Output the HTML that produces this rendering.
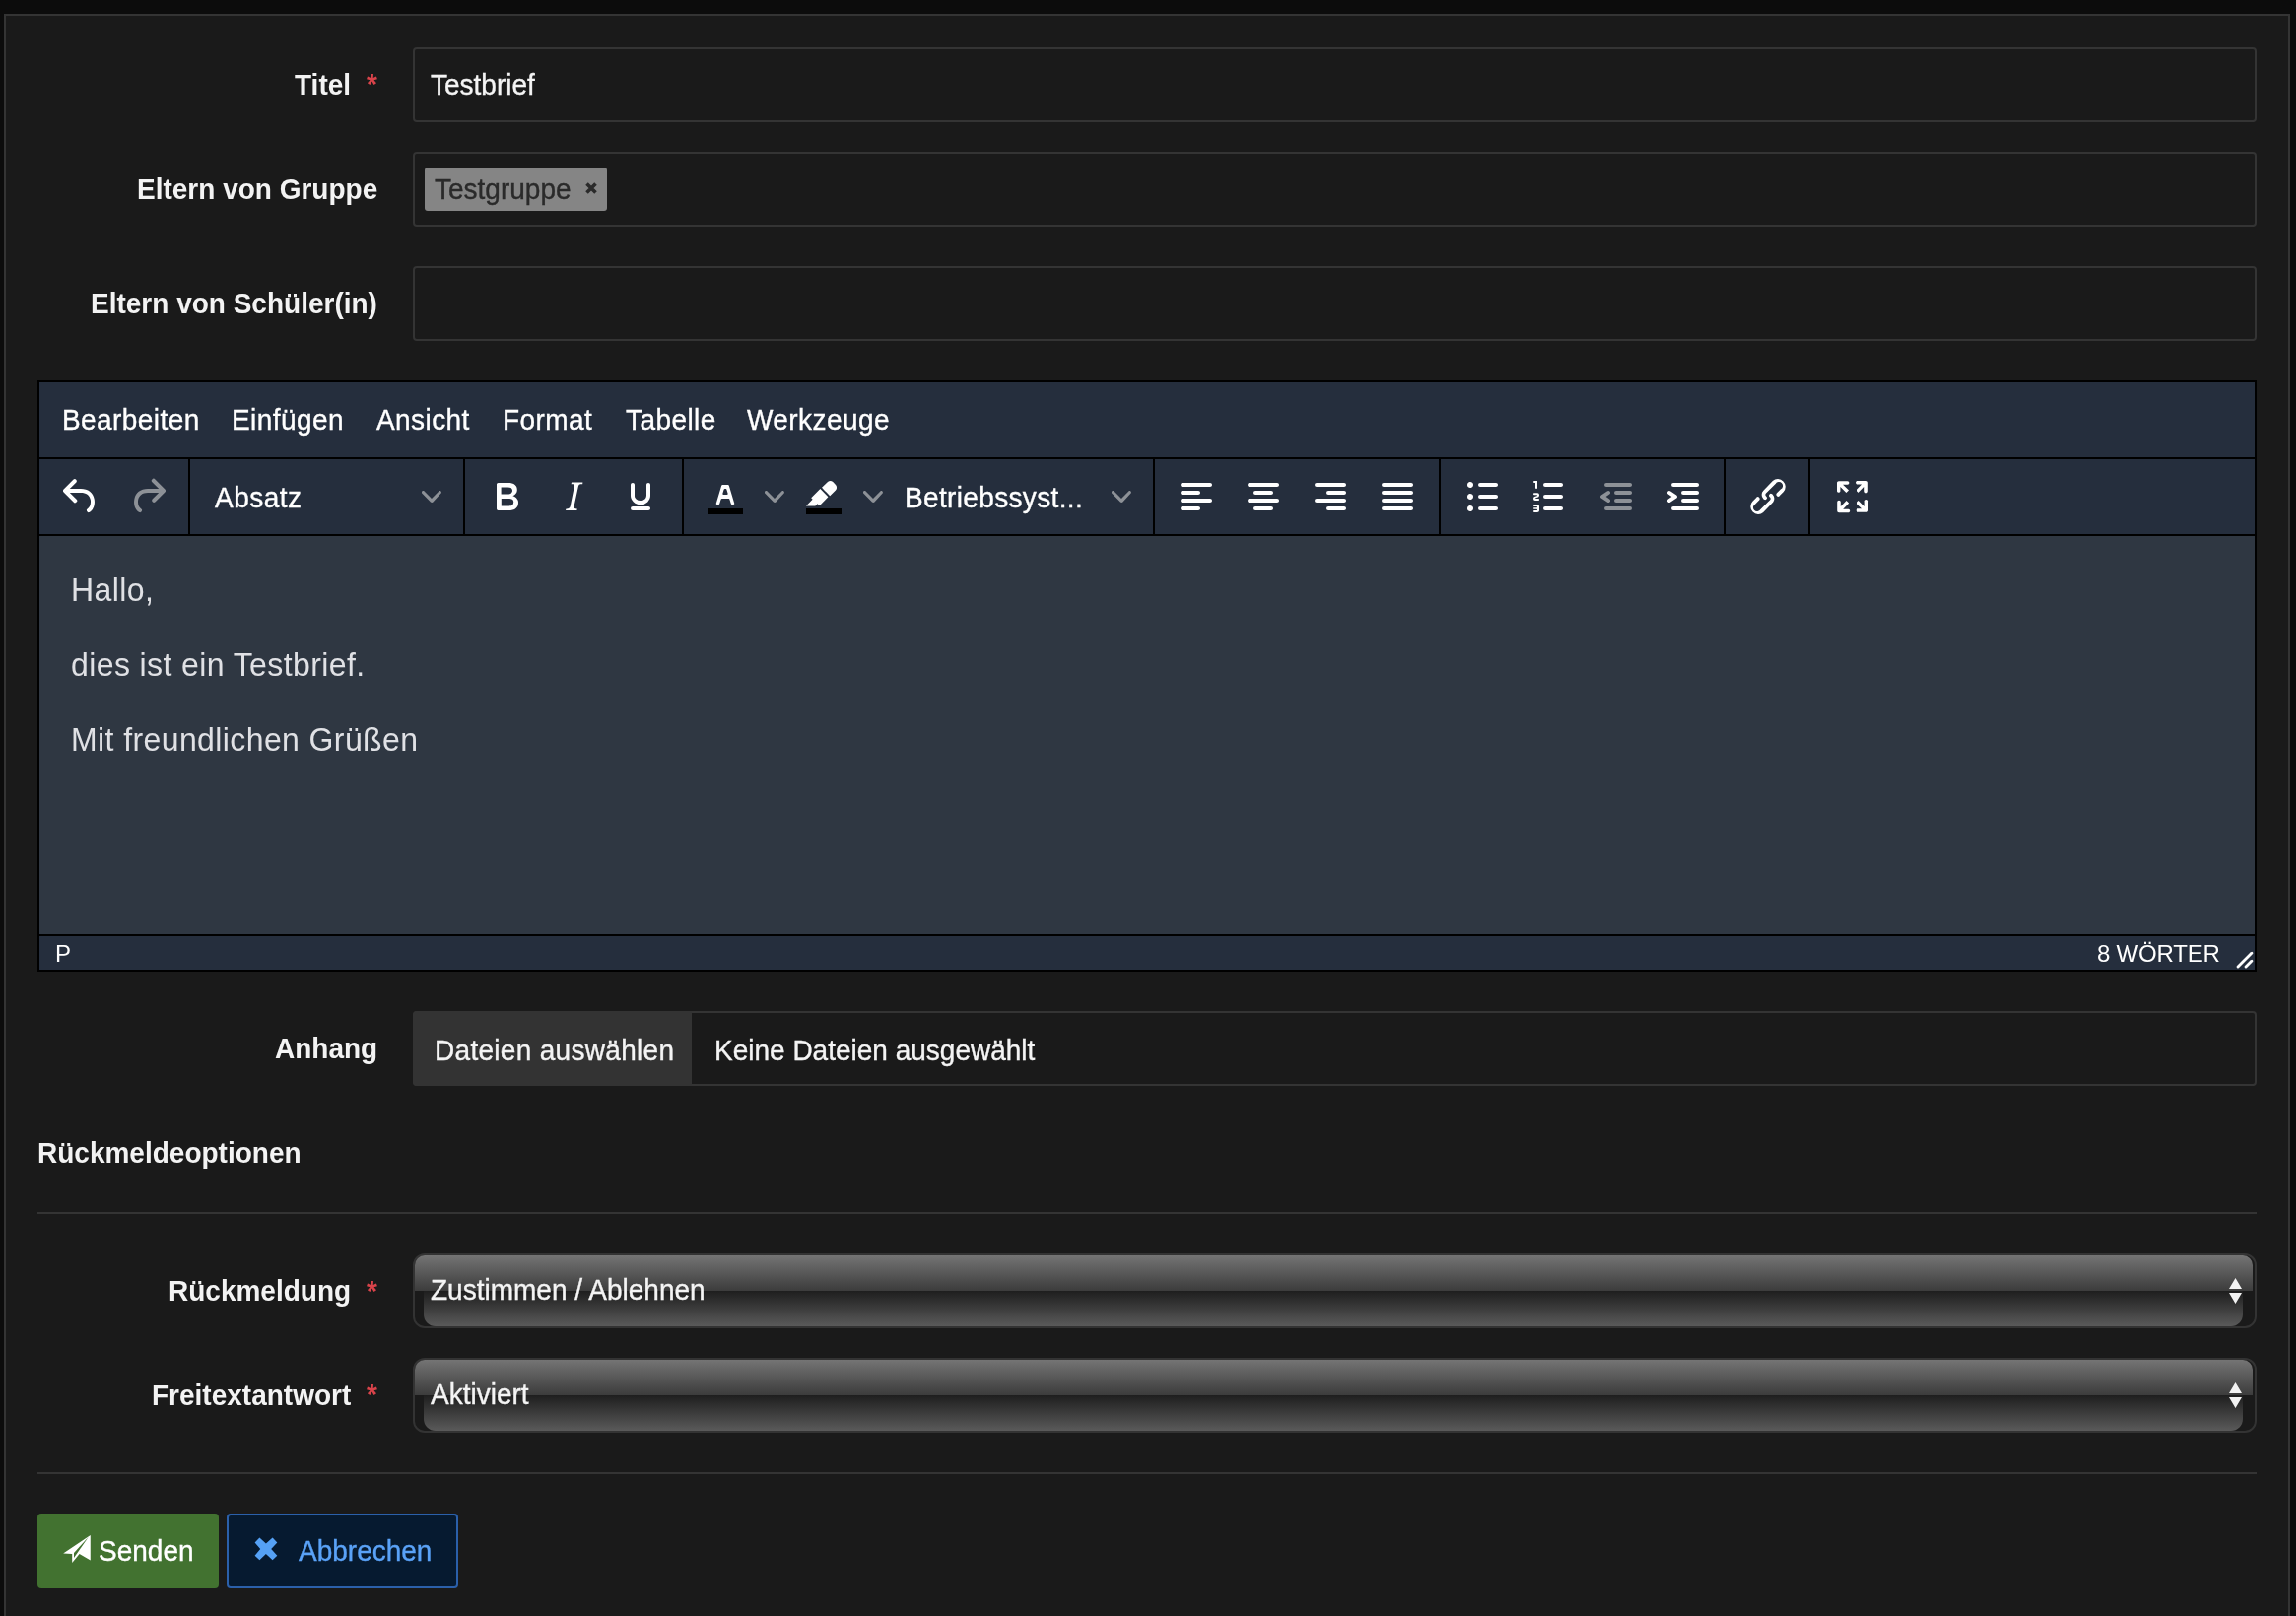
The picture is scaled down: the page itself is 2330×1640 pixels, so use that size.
<!DOCTYPE html>
<html><head><meta charset="utf-8"><title>Form</title><style>
html,body{margin:0;padding:0;}
body{width:2330px;height:1640px;overflow:hidden;background:#0c0c0c;position:relative;font-family:"Liberation Sans", sans-serif;}
.t{position:absolute;white-space:nowrap;will-change:transform;}
.b{position:absolute;box-sizing:border-box;}
svg{position:absolute;}
</style></head>
<body>
<div class="b" style="left:4px;top:14px;width:2320px;height:1626px;background:#1a1a1a;border:2px solid #343434;border-bottom:none;"></div>
<div class="t" style="right:1974px;top:72.80px;font-size:28px;line-height:28px;font-weight:700;color:#f3f3f3;text-align:right;transform:scaleY(1.05);transform-origin:0 23.70px;">Titel</div>
<div class="t" style="left:371.5px;top:72.10px;font-size:28px;line-height:28px;font-weight:700;color:#d9434a;transform:scaleY(1.05);transform-origin:0 23.70px;">*</div>
<div class="b" style="left:419px;top:48px;width:1871px;height:76px;border:2px solid #343434;border-radius:4px;"></div>
<div class="t" style="left:437px;top:72.80px;font-size:28px;line-height:28px;font-weight:400;color:#f4f4f4;transform:scaleY(1.05);transform-origin:0 23.70px;-webkit-text-stroke:0.35px #f4f4f4;">Testbrief</div>
<div class="t" style="right:1947px;top:178.80px;font-size:28px;line-height:28px;font-weight:700;color:#f3f3f3;text-align:right;transform:scaleY(1.05);transform-origin:0 23.70px;">Eltern von Gruppe</div>
<div class="b" style="left:419px;top:154px;width:1871px;height:76px;border:2px solid #343434;border-radius:4px;"></div>
<div class="b" style="left:431px;top:170px;width:185px;height:44px;background:#858585;border-radius:3px;"></div>
<div class="t" style="left:441px;top:179.40px;font-size:28px;line-height:28px;font-weight:400;color:#2a2a2a;transform:scaleY(1.05);transform-origin:0 23.70px;-webkit-text-stroke:0.35px #2a2a2a;">Testgruppe</div>
<svg style="left:594px;top:185px" width="12" height="12" viewBox="0 0 12 12"><path d="M1.5 1.5L10.5 10.5M10.5 1.5L1.5 10.5" stroke="#2a2a2a" stroke-width="3.6" stroke-linecap="butt"/></svg>
<div class="t" style="right:1947px;top:294.80px;font-size:28px;line-height:28px;font-weight:700;color:#f3f3f3;text-align:right;transform:scaleY(1.05);transform-origin:0 23.70px;">Eltern von Sch&uuml;ler(in)</div>
<div class="b" style="left:419px;top:270px;width:1871px;height:76px;border:2px solid #343434;border-radius:4px;"></div>
<div class="b" style="left:38px;top:386px;width:2252px;height:600px;background:#000;"></div>
<div class="b" style="left:40px;top:388px;width:2248px;height:76px;background:#252e3d;"></div>
<div class="b" style="left:40px;top:466px;width:2248px;height:76px;background:#252e3d;"></div>
<div class="b" style="left:40px;top:544px;width:2248px;height:404px;background:#2f3742;"></div>
<div class="b" style="left:40px;top:950px;width:2248px;height:34px;background:#252e3d;"></div>
<div class="t" style="left:63px;top:413.30px;font-size:28px;line-height:28px;font-weight:400;color:#ffffff;letter-spacing:0.42px;transform:scaleY(1.05);transform-origin:0 23.70px;-webkit-text-stroke:0.35px #ffffff;">Bearbeiten</div>
<div class="t" style="left:235px;top:413.30px;font-size:28px;line-height:28px;font-weight:400;color:#ffffff;letter-spacing:0.42px;transform:scaleY(1.05);transform-origin:0 23.70px;-webkit-text-stroke:0.35px #ffffff;">Einf&uuml;gen</div>
<div class="t" style="left:382px;top:413.30px;font-size:28px;line-height:28px;font-weight:400;color:#ffffff;letter-spacing:0.42px;transform:scaleY(1.05);transform-origin:0 23.70px;-webkit-text-stroke:0.35px #ffffff;">Ansicht</div>
<div class="t" style="left:509.5px;top:413.30px;font-size:28px;line-height:28px;font-weight:400;color:#ffffff;letter-spacing:0.42px;transform:scaleY(1.05);transform-origin:0 23.70px;-webkit-text-stroke:0.35px #ffffff;">Format</div>
<div class="t" style="left:635px;top:413.30px;font-size:28px;line-height:28px;font-weight:400;color:#ffffff;letter-spacing:0.42px;transform:scaleY(1.05);transform-origin:0 23.70px;-webkit-text-stroke:0.35px #ffffff;">Tabelle</div>
<div class="t" style="left:758px;top:413.30px;font-size:28px;line-height:28px;font-weight:400;color:#ffffff;letter-spacing:0.42px;transform:scaleY(1.05);transform-origin:0 23.70px;-webkit-text-stroke:0.35px #ffffff;">Werkzeuge</div>
<div class="b" style="left:191px;top:466px;width:2px;height:76px;background:#000;"></div>
<div class="b" style="left:470px;top:466px;width:2px;height:76px;background:#000;"></div>
<div class="b" style="left:692px;top:466px;width:2px;height:76px;background:#000;"></div>
<div class="b" style="left:1170px;top:466px;width:2px;height:76px;background:#000;"></div>
<div class="b" style="left:1460px;top:466px;width:2px;height:76px;background:#000;"></div>
<div class="b" style="left:1750px;top:466px;width:2px;height:76px;background:#000;"></div>
<div class="b" style="left:1835px;top:466px;width:2px;height:76px;background:#000;"></div>
<svg style="left:58px;top:480px" width="48" height="48" viewBox="0 0 24 24" fill="#ffffff"><path d="M6.4 8H12c3.7 0 6.2 2 6.8 5.1.6 2.7-.4 5.6-2.3 6.8a1 1 0 01-1-1.8c1.1-.7 1.8-2.7 1.4-4.6-.5-2.2-2.2-3.5-4.9-3.5H6.4l3.3 3.3a1 1 0 11-1.4 1.4l-5-5a1 1 0 010-1.4l5-5a1 1 0 011.4 1.4L6.4 8z" fill-rule="nonzero"/></svg>
<svg style="left:126px;top:480px" width="48" height="48" viewBox="0 0 24 24" fill="#8d9197"><path d="M17.6 10H12c-2.8 0-4.4 1.4-4.9 3.5-.4 2 .3 4 1.4 4.6a1 1 0 11-1 1.8c-2-1.2-2.9-4.1-2.3-6.8.6-3 3-5.1 6.8-5.1h5.6l-3.3-3.3a1 1 0 111.4-1.4l5 5a1 1 0 010 1.4l-5 5a1 1 0 01-1.4-1.4l3.3-3.3z" fill-rule="nonzero"/></svg>
<svg style="left:428px;top:494px" width="20" height="20" viewBox="0 0 10 10" fill="#8d9197"><path d="M8.7 2.2c.3-.3.8-.3 1 0 .4.4.4.9 0 1.2L5.7 7.8c-.3.3-.9.3-1.2 0L.2 3.4a.8.8 0 010-1.2c.3-.3.8-.3 1.1 0L5 6l3.7-3.8z" fill-rule="nonzero"/></svg>
<svg style="left:490px;top:480px" width="48" height="48" viewBox="0 0 24 24" fill="#ffffff"><path d="M7.8 19c-.3 0-.5 0-.6-.2l-.2-.5V5.7c0-.2 0-.4.2-.5l.6-.2h5c1.5 0 2.7.3 3.5 1 .7.6 1.1 1.4 1.1 2.5a3 3 0 01-.6 1.9c-.4.6-1 1-1.6 1.2.4.1.9.3 1.3.6s.8.7 1 1.2c.4.4.5 1 .5 1.6 0 1.3-.4 2.3-1.3 3-.8.7-2.1 1-3.8 1H7.8zm5-8.3c.6 0 1.2-.1 1.6-.5.4-.3.6-.7.6-1.3 0-1.1-.8-1.7-2.3-1.7H9.3v3.5h3.4zm.5 6c.7 0 1.3-.1 1.7-.4.4-.4.6-.9.6-1.5s-.2-1-.7-1.4c-.4-.3-1-.4-2-.4H9.4v3.8h4z" fill-rule="evenodd"/></svg>
<svg style="left:558px;top:480px" width="48" height="48" viewBox="0 0 24 24" fill="#ffffff"><path d="M16.7 4.7l-.1.9h-.3c-.6 0-1 0-1.4.3-.3.3-.4.6-.5 1.1l-2.1 9.8v.6c0 .5.4.8 1.4.8h.2l-.2.8H8l.2-.8h.2c1.1 0 1.8-.5 2-1.5l2-9.8.1-.5c0-.6-.4-.8-1.4-.8h-.3l.2-.9h5.8z" fill-rule="evenodd"/></svg>
<svg style="left:626px;top:480px" width="48" height="48" viewBox="0 0 24 24" fill="#ffffff"><path d="M16 5c.6 0 1 .4 1 1v5.5a4 4 0 01-.4 1.8l-1 1.4a5.3 5.3 0 01-5.5 1 5 5 0 01-1.6-1c-.5-.4-.8-.9-1.1-1.4a4 4 0 01-.4-1.8V6c0-.6.4-1 1-1s1 .4 1 1v5.5c0 .3 0 .6.2 1l.6.7a3.3 3.3 0 002.2.8 3.4 3.4 0 002.2-.8c.3-.2.4-.5.6-.8l.2-.9V6c0-.6.4-1 1-1zM8 17h8c.6 0 1 .4 1 1s-.4 1-1 1H8a1 1 0 010-2z" fill-rule="evenodd"/></svg>
<svg style="left:712px;top:480px" width="48" height="48" viewBox="0 0 24 24" fill="#ffffff"><path d="M3 18h18v3H3z" fill="#000"/><path d="M8.7 16h-.8a.5.5 0 01-.5-.6l2.7-9c.1-.3.3-.4.5-.4h2.8c.2 0 .4.1.5.4l2.7 9a.5.5 0 01-.5.6h-.8a.5.5 0 01-.4-.4l-.7-2.2c0-.3-.3-.4-.5-.4h-3.4c-.2 0-.4.1-.5.4l-.7 2.2c0 .3-.2.4-.4.4zm2.6-7.6l-.6 2a.5.5 0 00.5.6h1.6a.5.5 0 00.5-.6l-.6-2c0-.3-.3-.4-.5-.4h-.4c-.2 0-.4.1-.5.4z" fill-rule="evenodd"/></svg>
<svg style="left:776px;top:494px" width="20" height="20" viewBox="0 0 10 10" fill="#8d9197"><path d="M8.7 2.2c.3-.3.8-.3 1 0 .4.4.4.9 0 1.2L5.7 7.8c-.3.3-.9.3-1.2 0L.2 3.4a.8.8 0 010-1.2c.3-.3.8-.3 1.1 0L5 6l3.7-3.8z" fill-rule="nonzero"/></svg>
<svg style="left:812px;top:480px" width="48" height="48" viewBox="0 0 24 24" fill="#ffffff"><path d="M3 18h18v3H3z" fill="#000"/><path fill-rule="nonzero" d="M7.7 16.7H3l3.3-3.3-.7-.8L10.2 8l4 4.1-4 4.2c-.2.2-.6.2-.8 0l-.6-.7-1.1 1.1zm5-7.5L11 7.4l3-2.9a2 2 0 012.6 0L18 6c.7.7.7 2 0 2.7l-2.9 2.9-1.8-1.8-.5-.6"/></svg>
<svg style="left:876px;top:494px" width="20" height="20" viewBox="0 0 10 10" fill="#8d9197"><path d="M8.7 2.2c.3-.3.8-.3 1 0 .4.4.4.9 0 1.2L5.7 7.8c-.3.3-.9.3-1.2 0L.2 3.4a.8.8 0 010-1.2c.3-.3.8-.3 1.1 0L5 6l3.7-3.8z" fill-rule="nonzero"/></svg>
<svg style="left:1128px;top:494px" width="20" height="20" viewBox="0 0 10 10" fill="#8d9197"><path d="M8.7 2.2c.3-.3.8-.3 1 0 .4.4.4.9 0 1.2L5.7 7.8c-.3.3-.9.3-1.2 0L.2 3.4a.8.8 0 010-1.2c.3-.3.8-.3 1.1 0L5 6l3.7-3.8z" fill-rule="nonzero"/></svg>
<svg style="left:1190px;top:480px" width="48" height="48" viewBox="0 0 24 24" fill="#ffffff"><path d="M5 5h14c.6 0 1 .4 1 1s-.4 1-1 1H5a1 1 0 110-2zm0 4h8c.6 0 1 .4 1 1s-.4 1-1 1H5a1 1 0 110-2zm0 8h8c.6 0 1 .4 1 1s-.4 1-1 1H5a1 1 0 010-2zm0-4h14c.6 0 1 .4 1 1s-.4 1-1 1H5a1 1 0 010-2z" fill-rule="evenodd"/></svg>
<svg style="left:1258px;top:480px" width="48" height="48" viewBox="0 0 24 24" fill="#ffffff"><path d="M5 5h14c.6 0 1 .4 1 1s-.4 1-1 1H5a1 1 0 110-2zm3 4h8c.6 0 1 .4 1 1s-.4 1-1 1H8a1 1 0 110-2zm0 8h8c.6 0 1 .4 1 1s-.4 1-1 1H8a1 1 0 010-2zm-3-4h14c.6 0 1 .4 1 1s-.4 1-1 1H5a1 1 0 010-2z" fill-rule="evenodd"/></svg>
<svg style="left:1326px;top:480px" width="48" height="48" viewBox="0 0 24 24" fill="#ffffff"><path d="M5 5h14c.6 0 1 .4 1 1s-.4 1-1 1H5a1 1 0 110-2zm6 4h8c.6 0 1 .4 1 1s-.4 1-1 1h-8a1 1 0 010-2zm0 8h8c.6 0 1 .4 1 1s-.4 1-1 1h-8a1 1 0 010-2zm-6-4h14c.6 0 1 .4 1 1s-.4 1-1 1H5a1 1 0 010-2z" fill-rule="evenodd"/></svg>
<svg style="left:1394px;top:480px" width="48" height="48" viewBox="0 0 24 24" fill="#ffffff"><path d="M5 5h14c.6 0 1 .4 1 1s-.4 1-1 1H5a1 1 0 110-2zm0 4h14c.6 0 1 .4 1 1s-.4 1-1 1H5a1 1 0 110-2zm0 4h14c.6 0 1 .4 1 1s-.4 1-1 1H5a1 1 0 010-2zm0 4h14c.6 0 1 .4 1 1s-.4 1-1 1H5a1 1 0 010-2z" fill-rule="evenodd"/></svg>
<svg style="left:1480px;top:480px" width="48" height="48" viewBox="0 0 24 24" fill="#ffffff"><path d="M11 5h8c.6 0 1 .4 1 1s-.4 1-1 1h-8a1 1 0 010-2zm0 6h8c.6 0 1 .4 1 1s-.4 1-1 1h-8a1 1 0 010-2zm0 6h8c.6 0 1 .4 1 1s-.4 1-1 1h-8a1 1 0 010-2zM4.5 6c0-.4.1-.8.4-1 .3-.4.7-.5 1.1-.5.4 0 .8.1 1 .4.4.3.5.7.5 1.1 0 .4-.1.8-.4 1-.3.4-.7.5-1.1.5-.4 0-.8-.1-1-.4-.4-.3-.5-.7-.5-1.1zm0 6c0-.4.1-.8.4-1 .3-.4.7-.5 1.1-.5.4 0 .8.1 1 .4.4.3.5.7.5 1.1 0 .4-.1.8-.4 1-.3.4-.7.5-1.1.5-.4 0-.8-.1-1-.4-.4-.3-.5-.7-.5-1.1zm0 6c0-.4.1-.8.4-1 .3-.4.7-.5 1.1-.5.4 0 .8.1 1 .4.4.3.5.7.5 1.1 0 .4-.1.8-.4 1-.3.4-.7.5-1.1.5-.4 0-.8-.1-1-.4-.4-.3-.5-.7-.5-1.1z" fill-rule="evenodd"/></svg>
<svg style="left:1548px;top:480px" width="48" height="48" viewBox="0 0 24 24" fill="#ffffff"><path d="M10 17h8c.6 0 1 .4 1 1s-.4 1-1 1h-8a1 1 0 010-2zm0-6h8c.6 0 1 .4 1 1s-.4 1-1 1h-8a1 1 0 010-2zm0-6h8c.6 0 1 .4 1 1s-.4 1-1 1h-8a1 1 0 110-2zM6 4v3.5c0 .3-.2.5-.5.5a.5.5 0 01-.5-.5V5h-.5a.5.5 0 010-1H6zm-1 8.8l.2.2h1.3c.3 0 .5.2.5.5s-.2.5-.5.5H4.9a1 1 0 01-.9-1V13c0-.4.3-.8.6-1l1.2-.4.2-.3a.2.2 0 00-.2-.2H4.5a.5.5 0 01-.5-.5c0-.3.2-.5.5-.5h1.6c.5 0 .9.4.9 1v.1c0 .4-.3.8-.6 1l-1.2.4-.2.3zM7 17v2c0 .6-.4 1-1 1H4.5a.5.5 0 010-1h1.2c.2 0 .3-.1.3-.3 0-.2-.1-.3-.3-.3H4.4a.4.4 0 110-.8h1.3c.2 0 .3-.1.3-.3 0-.2-.1-.3-.3-.3H4.5a.5.5 0 110-1H6c.6 0 1 .4 1 1z" fill-rule="evenodd"/></svg>
<svg style="left:1616px;top:480px" width="48" height="48" viewBox="0 0 24 24" fill="#8d9197"><path d="M7 5h12c.6 0 1 .4 1 1s-.4 1-1 1H7a1 1 0 110-2zm5 4h7c.6 0 1 .4 1 1s-.4 1-1 1h-7a1 1 0 010-2zm0 4h7c.6 0 1 .4 1 1s-.4 1-1 1h-7a1 1 0 010-2zm-5 4h12a1 1 0 010 2H7a1 1 0 010-2zm1.6-3.8a1 1 0 01-1.2 1.6l-3-2a1 1 0 010-1.6l3-2a1 1 0 011.2 1.6L6.8 12l1.8 1.2z" fill-rule="evenodd"/></svg>
<svg style="left:1684px;top:480px" width="48" height="48" viewBox="0 0 24 24" fill="#ffffff"><path d="M7 5h12c.6 0 1 .4 1 1s-.4 1-1 1H7a1 1 0 110-2zm5 4h7c.6 0 1 .4 1 1s-.4 1-1 1h-7a1 1 0 010-2zm0 4h7c.6 0 1 .4 1 1s-.4 1-1 1h-7a1 1 0 010-2zm-5 4h12a1 1 0 010 2H7a1 1 0 010-2zm-2.6-3.8L6.2 12l-1.8-1.2a1 1 0 011.2-1.6l3 2a1 1 0 010 1.6l-3 2a1 1 0 11-1.2-1.6z" fill-rule="evenodd"/></svg>
<svg style="left:1770px;top:480px" width="48" height="48" viewBox="0 0 24 24" fill="#ffffff"><path d="M6.2 12.3a1 1 0 011.4 1.4l-2 2a2 2 0 102.6 2.8l4.8-4.8a1 1 0 000-1.4 1 1 0 111.4-1.3 2.9 2.9 0 010 4L9.6 20a3.9 3.9 0 01-5.5-5.5l2-2zm11.6-.6a1 1 0 01-1.4-1.4l2-2a2 2 0 10-2.6-2.8L11 10.3a1 1 0 000 1.4A1 1 0 119.6 13a2.9 2.9 0 010-4L14.4 4a3.9 3.9 0 015.5 5.5l-2 2z" fill-rule="nonzero"/></svg>
<svg style="left:1856px;top:480px" width="48" height="48" viewBox="0 0 24 24" fill="#ffffff"><path d="M15.3 10l-1.2-1.3 2.9-3h-2.3a.9.9 0 110-1.7H19c.5 0 .9.4.9.9v4.4a.9.9 0 11-1.8 0V7l-2.9 3zm0 4l3 3v-2.3a.9.9 0 111.7 0V19c0 .5-.4.9-.9.9h-4.4a.9.9 0 110-1.8H17l-3-2.9 1.3-1.2zM10 15.4l-2.9 3h2.3a.9.9 0 110 1.7H5a.9.9 0 01-.9-.9v-4.4a.9.9 0 111.8 0V17l2.9-3 1.2 1.3zM8.7 10L5.7 7v2.3a.9.9 0 01-1.7 0V5c0-.5.4-.9.9-.9h4.4a.9.9 0 010 1.8H7l3 2.9-1.3 1.2z" fill-rule="nonzero"/></svg>
<svg style="left:2268px;top:964px" width="20" height="20" viewBox="0 0 10 10" fill="#ffffff"><path d="M8.1 1.1A.5.5 0 119 2l-7 7A.5.5 0 111 8l7-7zM8.1 5.1A.5.5 0 119 6l-3 3A.5.5 0 115 8l3-3z" fill-rule="nonzero"/></svg>
<div class="t" style="left:218px;top:491.80px;font-size:28px;line-height:28px;font-weight:400;color:#ffffff;letter-spacing:0.5px;transform:scaleY(1.05);transform-origin:0 23.70px;-webkit-text-stroke:0.35px #ffffff;">Absatz</div>
<div class="t" style="left:918px;top:491.80px;font-size:28px;line-height:28px;font-weight:400;color:#ffffff;letter-spacing:0.35px;transform:scaleY(1.05);transform-origin:0 23.70px;-webkit-text-stroke:0.35px #ffffff;">Betriebssyst...</div>
<div class="t" style="left:72px;top:583.41px;font-size:32px;line-height:32px;font-weight:400;color:#e0e1e5;letter-spacing:0.4px;transform:scaleY(1.02);transform-origin:0 27.09px;">Hallo,</div>
<div class="t" style="left:72px;top:658.91px;font-size:32px;line-height:32px;font-weight:400;color:#e0e1e5;letter-spacing:0.4px;transform:scaleY(1.02);transform-origin:0 27.09px;">dies ist ein Testbrief.</div>
<div class="t" style="left:72px;top:734.91px;font-size:32px;line-height:32px;font-weight:400;color:#e0e1e5;letter-spacing:0.4px;transform:scaleY(1.02);transform-origin:0 27.09px;">Mit freundlichen Gr&uuml;&szlig;en</div>
<div class="t" style="left:56px;top:955.68px;font-size:24px;line-height:24px;font-weight:400;color:#ffffff;">P</div>
<div class="t" style="right:77.5px;top:955.68px;font-size:24px;line-height:24px;font-weight:400;color:#ffffff;text-align:right;letter-spacing:-0.2px;">8 W&Ouml;RTER</div>
<div class="t" style="right:1947px;top:1051.20px;font-size:28px;line-height:28px;font-weight:700;color:#f3f3f3;text-align:right;transform:scaleY(1.05);transform-origin:0 23.70px;">Anhang</div>
<div class="b" style="left:419px;top:1026px;width:1871px;height:76px;border:2px solid #343434;border-radius:4px;"></div>
<div class="b" style="left:419px;top:1026px;width:283px;height:76px;background:#333333;border-radius:4px 0 0 4px;"></div>
<div class="t" style="left:441px;top:1053.20px;font-size:28px;line-height:28px;font-weight:400;color:#f4f4f4;letter-spacing:0.3px;transform:scaleY(1.05);transform-origin:0 23.70px;-webkit-text-stroke:0.35px #f4f4f4;">Dateien ausw&auml;hlen</div>
<div class="t" style="left:725px;top:1052.90px;font-size:28px;line-height:28px;font-weight:400;color:#f4f4f4;transform:scaleY(1.05);transform-origin:0 23.70px;-webkit-text-stroke:0.35px #f4f4f4;">Keine Dateien ausgew&auml;hlt</div>
<div class="t" style="left:38px;top:1157.00px;font-size:28px;line-height:28px;font-weight:700;color:#f3f3f3;transform:scaleY(1.05);transform-origin:0 23.70px;">R&uuml;ckmeldeoptionen</div>
<div class="b" style="left:38px;top:1230px;width:2252px;height:2px;background:#343434;"></div>
<div class="t" style="right:1974px;top:1297.40px;font-size:28px;line-height:28px;font-weight:700;color:#f3f3f3;text-align:right;transform:scaleY(1.05);transform-origin:0 23.70px;">R&uuml;ckmeldung</div>
<div class="t" style="left:371.5px;top:1296.70px;font-size:28px;line-height:28px;font-weight:700;color:#d9434a;transform:scaleY(1.05);transform-origin:0 23.70px;">*</div>
<div class="b" style="left:419px;top:1272px;width:1871px;height:76px;border:2px solid #333333;border-radius:12px;background:#1a1a1a;"></div>
<div class="b" style="left:421px;top:1274px;width:1865px;height:36px;background:linear-gradient(#747474,#3c3c3c);border-radius:10px 10px 0 0;"></div>
<div class="b" style="left:430px;top:1310px;width:1846px;height:36px;background:linear-gradient(#1e1e1e,#5a5a5a);border-radius:0 0 12px 12px;"></div>
<div class="t" style="left:437px;top:1296.40px;font-size:28px;line-height:28px;font-weight:400;color:#f4f4f4;transform:scaleY(1.05);transform-origin:0 23.70px;-webkit-text-stroke:0.35px #f4f4f4;">Zustimmen / Ablehnen</div>
<svg style="left:2261.5px;top:1297px" width="13" height="27" viewBox="0 0 13 27"><path d="M6.5 0L13 11H0z M0 15H13L6.5 26z" fill="#f2f2f2"/></svg>
<div class="t" style="right:1974px;top:1402.80px;font-size:28px;line-height:28px;font-weight:700;color:#f3f3f3;text-align:right;transform:scaleY(1.05);transform-origin:0 23.70px;">Freitextantwort</div>
<div class="t" style="left:371.5px;top:1402.10px;font-size:28px;line-height:28px;font-weight:700;color:#d9434a;transform:scaleY(1.05);transform-origin:0 23.70px;">*</div>
<div class="b" style="left:419px;top:1378px;width:1871px;height:76px;border:2px solid #333333;border-radius:12px;background:#1a1a1a;"></div>
<div class="b" style="left:421px;top:1380px;width:1865px;height:36px;background:linear-gradient(#747474,#3c3c3c);border-radius:10px 10px 0 0;"></div>
<div class="b" style="left:430px;top:1416px;width:1846px;height:36px;background:linear-gradient(#1e1e1e,#5a5a5a);border-radius:0 0 12px 12px;"></div>
<div class="t" style="left:437px;top:1401.80px;font-size:28px;line-height:28px;font-weight:400;color:#f4f4f4;transform:scaleY(1.05);transform-origin:0 23.70px;-webkit-text-stroke:0.35px #f4f4f4;">Aktiviert</div>
<svg style="left:2261.5px;top:1403px" width="13" height="27" viewBox="0 0 13 27"><path d="M6.5 0L13 11H0z M0 15H13L6.5 26z" fill="#f2f2f2"/></svg>
<div class="b" style="left:38px;top:1494px;width:2252px;height:2px;background:#343434;"></div>
<div class="b" style="left:38px;top:1536px;width:184px;height:76px;background:#427230;border-radius:4px;"></div>
<div class="t" style="left:100px;top:1561.00px;font-size:28px;line-height:28px;font-weight:400;color:#ffffff;transform:scaleY(1.05);transform-origin:0 23.70px;-webkit-text-stroke:0.35px #ffffff;">Senden</div>
<div class="b" style="left:230px;top:1536px;width:235px;height:76px;background:#061a30;border:2px solid #2b60aa;border-radius:4px;"></div>
<div class="t" style="left:303px;top:1561.00px;font-size:28px;line-height:28px;font-weight:400;color:#5aa2f7;transform:scaleY(1.05);transform-origin:0 23.70px;-webkit-text-stroke:0.35px #5aa2f7;">Abbrechen</div>
<svg style="left:0;top:0" width="2330" height="1640"><path d="M64.2 1576.4L91.75 1557.9L91.75 1583.4L80.6 1577.1L73.2 1585.9L73.2 1577.1Z" fill="#fff"/><path d="M75 1576L89.8 1559.8L75 1581Z" fill="#427230"/><path d="M263.4 1560.4L269.9 1566.6L276.6 1560.4L281.3 1565.5L275.2 1572L281.3 1578.7L276.6 1583.3L269.9 1577.1L263.4 1583.3L258.6 1578.7L264.2 1572L258.6 1565.5Z" fill="#55a1f5"/></svg>
</body></html>
